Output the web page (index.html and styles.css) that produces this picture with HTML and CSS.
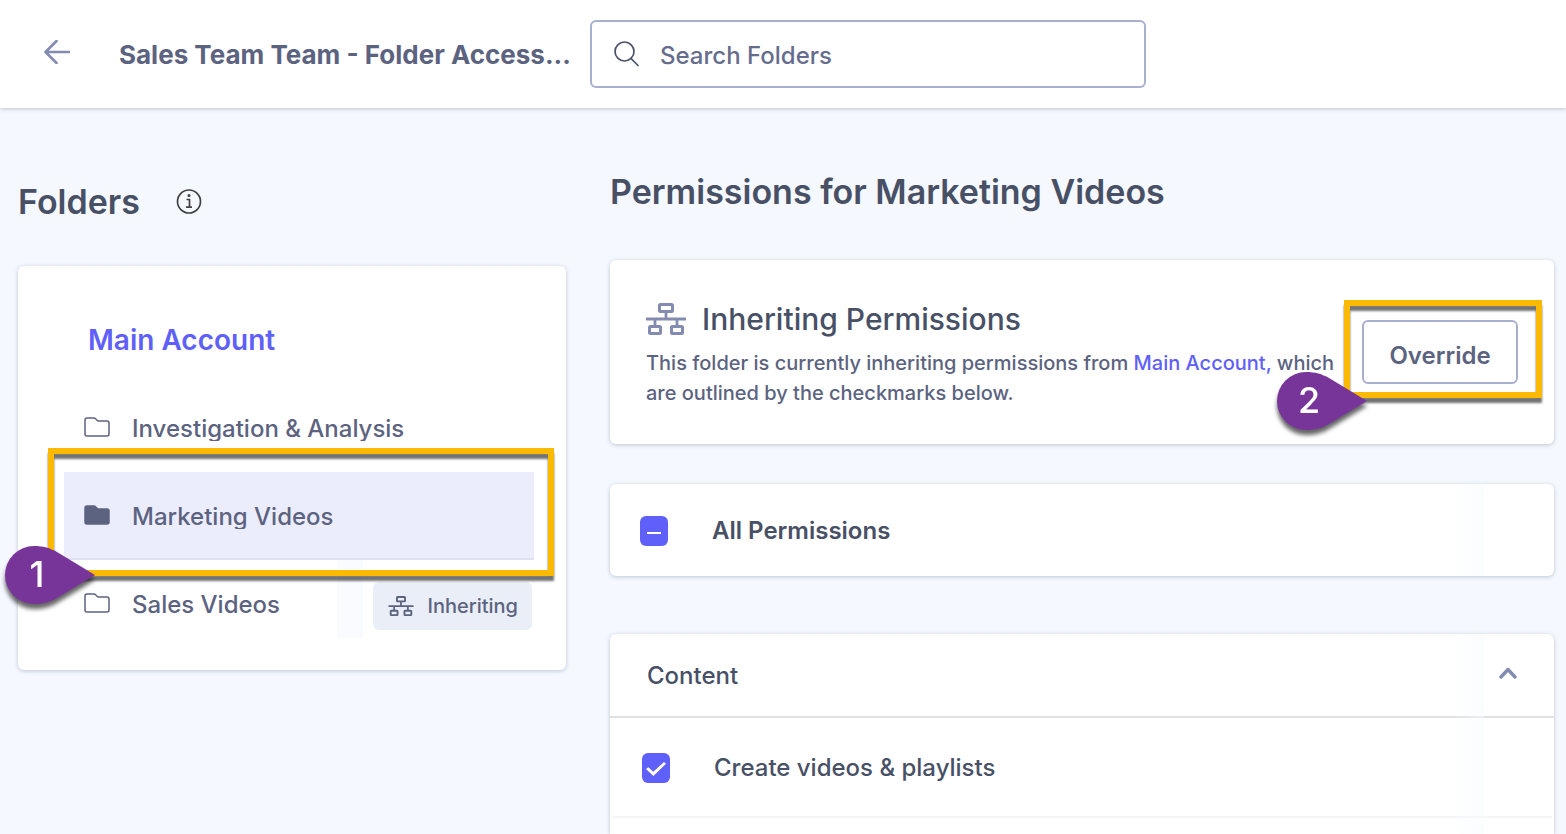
FILE: index.html
```
<!DOCTYPE html>
<html lang="en">
    <head>
        <meta charset="utf-8" />
        <title>Sales Team Team - Folder Access</title>
        <link rel="stylesheet" href="styles.css">
    </head>
    <body>
        <!-- shared icons -->
        <svg class="sprite" aria-hidden="true">
            <symbol id="icon-folder" viewBox="0 0 26 20">
                <path d="M1 3a2 2 0 0 1 2-2h7a2 2 0 0 1 1.500.700L14 4h9a2 2 0 0 1 2 2v11a2 2 0 0 1-2 2H3a2 2 0 0 1-2-2z" stroke="currentColor" stroke-width="1.500" stroke-linejoin="round"/>
            </symbol>
            <symbol id="icon-tree" viewBox="0 0 40 32">
                <g fill="none" stroke="currentColor">
                    <rect x="13.500" y="1.500" width="13" height="7" rx="1" stroke-width="3"/>
                    <rect x="3.500" y="23.500" width="11" height="7" rx="1" stroke-width="3"/>
                    <rect x="25.500" y="23.500" width="11" height="7" rx="1" stroke-width="3"/>
                    <path d="M0 16h40M20 9v7M9 16v7M31 16v7" stroke-width="2.800"/>
                </g>
            </symbol>
            <symbol id="icon-pin" viewBox="0 0 90 58">
                <path d="M29 0C38 0 45 2 52 6L90 29L52 52C45 56 38 58 29 58A29 29 0 0 1 29 0Z" fill="#773599"/>
            </symbol>
        </svg>

        <header class="top-bar">
            <button type="button" class="back" aria-label="Back">
                <svg width="26" height="24" viewBox="0 0 26 24" fill="none" stroke="currentColor" stroke-width="2.600" stroke-linecap="round" stroke-linejoin="round"><path d="M25 12H2M12.500 1L1.500 12L12.500 23"/></svg>
            </button>
            <h1 class="page-title">Sales Team Team - Folder Access...</h1>
            <label class="search">
                <svg width="26" height="26" viewBox="0 0 26 26" fill="none" stroke="currentColor" stroke-width="1.700" stroke-linecap="round"><circle cx="10.500" cy="10.500" r="9.500"/><path d="M17 17.500l7 7"/></svg>
                <input type="search" placeholder="Search Folders" aria-label="Search Folders">
            </label>
        </header>

        <main class="layout">
            <!-- folder tree -->
            <section class="folders">
                <div class="folders-heading">
                    <h2>Folders</h2>
                    <svg width="26" height="26" viewBox="0 0 26 26" fill="none" stroke="#414141" stroke-width="1.700"><circle cx="13" cy="12.500" r="11.500"/><path d="M10.500 10.500H13.500V18M10 18.200H16" /><circle cx="13" cy="6.500" r="1.500" fill="#414141" stroke="none"/></svg>
                </div>
                <nav class="card folder-card">
                    <a href="#" class="main-account">Main Account</a>
                    <ul class="folder-list">
                        <li class="folder">
                            <svg class="folder-icon"><use href="#icon-folder"/></svg>
                            <a href="#">Investigation &amp; Analysis</a>
                        </li>
                        <li class="folder selected">
                            <svg class="folder-icon"><use href="#icon-folder"/></svg>
                            <a href="#">Marketing Videos</a>
                            <div class="callout callout-folder"></div>
                            <div class="pin pin-folder"><svg><use href="#icon-pin"/></svg><span>1</span></div>
                        </li>
                        <li class="folder">
                            <svg class="folder-icon"><use href="#icon-folder"/></svg>
                            <a href="#">Sales Videos</a>
                            <span class="fade"></span>
                            <span class="badge"><svg><use href="#icon-tree"/></svg>Inheriting</span>
                        </li>
                    </ul>
                </nav>
            </section>

            <!-- permissions of the selected folder -->
            <section class="permissions">
                <h2>Permissions for Marketing Videos</h2>

                <div class="card inherit-card">
                    <div class="inherit-text">
                        <h3><svg><use href="#icon-tree"/></svg>Inheriting Permissions</h3>
                        <p>This folder is currently inheriting permissions from <a href="#">Main Account,</a> which are outlined by the checkmarks below.</p>
                    </div>
                    <div class="override-wrap">
                        <button type="button" class="override">Override</button>
                        <div class="callout callout-override"></div>
                        <div class="pin pin-override"><svg><use href="#icon-pin"/></svg><span>2</span></div>
                    </div>
                </div>

                <div class="card all-card">
                    <label class="check-row all-row">
                        <input type="checkbox" id="allPermissions">
                        <span>All Permissions</span>
                    </label>
                </div>

                <div class="card content-card">
                    <button type="button" class="content-heading">
                        Content
                        <svg width="18" height="16" viewBox="0 0 18 16" fill="none" stroke="#838bb0" stroke-width="3.400" stroke-linecap="round" stroke-linejoin="round"><path d="M2 10l7-7.500L16 10"/></svg>
                    </button>
                    <label class="check-row content-row">
                        <input type="checkbox" checked>
                        <span>Create videos &amp; playlists</span>
                    </label>
                </div>
            </section>
        </main>
        <script>
            // only some permissions are on
            document.getElementById("allPermissions").indeterminate = true;
        </script>
    </body>
</html>
```
FILE: styles.css
```
* {
    box-sizing: border-box;
}

body {
    display: flex;
    flex-direction: column;
    min-height: 100vh;
    margin: 0;
    background-color: #f5f8ff;
    color: #5c6380;
    font-family: Inter, "Liberation Sans", sans-serif;
    font-size: 24px;
    font-weight: 450;
}

h1, h2, h3, p, ul {
    margin: 0;
    padding: 0;
}

a {
    color: inherit;
    text-decoration: none;
}

button, input {
    font: inherit;
    color: inherit;
}

.sprite {
    position: absolute;
    width: 0;
    height: 0;
}

/* top bar */
.top-bar {
    display: flex;
    align-items: center;
    padding: 20px 44px;
    background-color: white;
    box-shadow: 0 1px 4px rgba(60, 70, 100, 0.3);
}

.back {
    display: flex;
    margin: 0 49px 4px 0;
    padding: 0;
    border: none;
    background: none;
    color: #838bb0;
    cursor: pointer;
}

.page-title {
    flex: 0 0 471px;
    font-size: 26px;
    font-weight: 700;
    white-space: nowrap;
}

.search {
    display: flex;
    align-items: center;
    gap: 20px;
    flex: 0 1 556px;
    height: 68px;
    padding: 0 22px;
    border: 2px solid #a7b0ce;
    border-radius: 6px;
    color: #4a5268;
}

.search input {
    flex: 1;
    min-width: 0;
    padding: 2px 0 0;
    border: none;
    outline: none;
    background: none;
}

.search input::placeholder {
    color: #666d8c;
    opacity: 1;
}

/* two columns */
.layout {
    display: grid;
    grid-template-columns: 548px 1fr;
    gap: 44px;
    flex: 1;
    padding: 0 12px 0 18px;
}

.layout h2 {
    color: #485066;
    font-size: 34px;
    font-weight: 600;
    line-height: 40px;
}

.card {
    position: relative;
    border-radius: 6px;
    background-color: white;
    box-shadow: 0 1px 4px rgba(60, 80, 100, 0.3);
}

/* folders */
.folders-heading {
    display: flex;
    align-items: center;
    gap: 36px;
    padding: 74px 0 44px;
}

.folder-card {
    padding: 54px 32px 22px 46px;
}

.main-account {
    display: block;
    padding: 0 24px;
    color: #5f5ffa;
    font-size: 28px;
    font-weight: 600;
    line-height: 40px;
}

.folder-list {
    padding-top: 24px;
    list-style: none;
}

.folder {
    position: relative;
    display: flex;
    align-items: center;
    gap: 22px;
    height: 88px;
    padding: 0 20px;
    border-bottom: 2px solid transparent;
}

.folder a {
    overflow: hidden;
    padding-top: 4px;
    line-height: 24px;
}

.folder-icon {
    width: 26px;
    height: 20px;
    fill: none;
}

.folder.selected {
    z-index: 1;
    border-color: #dfe1f1;
    background-color: #ebedfd;
}

.selected .folder-icon {
    fill: currentColor;
}

.fade {
    align-self: stretch;
    width: 26px;
    margin: 0 -12px 8px auto;
    background-color: #fafbff;
}

.badge {
    display: flex;
    align-items: center;
    gap: 12px;
    height: 48px;
    margin: 6px -18px 0 0;
    padding: 0 14px;
    border-radius: 6px;
    background-color: #eaeef6;
    font-size: 20px;
}

.badge svg {
    width: 28px;
    height: 20px;
}

/* permissions */
.permissions {
    display: flex;
    flex-direction: column;
}

.permissions h2 {
    padding: 64px 0 48px;
}

.inherit-card {
    display: flex;
    align-items: center;
    gap: 14px;
    min-height: 184px;
    margin-bottom: 40px;
    padding: 36px;
}

.inherit-text {
    flex: 1;
}

.inherit-text h3 {
    display: flex;
    align-items: center;
    gap: 16px;
    margin-bottom: 6px;
    color: #485066;
    font-size: 30px;
    font-weight: 500;
    line-height: 46px;
}

.inherit-text h3 svg {
    width: 40px;
    height: 32px;
    color: #838bb0;
}

.inherit-text p {
    font-size: 20px;
    font-weight: 500;
    line-height: 30px;
}

.inherit-text a {
    color: #5f5ffa;
}

.override-wrap {
    position: relative;
}

.override {
    width: 156px;
    height: 64px;
    padding: 6px 0 0;
    border: 2px solid #a7b0ce;
    border-radius: 6px;
    background-color: white;
    font-weight: 600;
    cursor: pointer;
}

.check-row {
    display: flex;
    align-items: center;
    gap: 44px;
    color: #485066;
}

.check-row input {
    appearance: none;
    display: grid;
    place-items: center;
    width: 28px;
    height: 30px;
    margin: 2px 0 0;
    border-radius: 6px;
    background-color: #5f5ffa;
}

.check-row input:indeterminate::before {
    content: "";
    width: 14px;
    height: 2px;
    margin-top: 4px;
    background-color: white;
}

.check-row input:checked::before {
    content: "";
    width: 20px;
    height: 14px;
    margin-top: 2px;
    background-color: white;
    clip-path: polygon(0 50%, 12% 38%, 36% 70%, 90% 0, 100% 12%, 37% 100%);
}

.all-card {
    margin-bottom: 58px;
}

.all-row {
    height: 92px;
    padding: 0 30px;
    font-weight: 600;
}

.content-card {
    flex: 1;
    border-radius: 6px 6px 0 0;
}

.content-heading {
    display: flex;
    align-items: center;
    justify-content: space-between;
    width: 100%;
    height: 84px;
    padding: 0 37px;
    border: none;
    border-bottom: 2px solid #e0e1e4;
    background: none;
    color: #485066;
    cursor: pointer;
}

.content-row {
    height: 100px;
    margin: 0 2px;
    padding: 0 30px;
    border-bottom: 2px solid #f4f5f7;
}

.all-card::after,
.content-card::after {
    content: "";
    position: absolute;
    top: 0;
    right: 70px;
    bottom: 0;
    width: 30px;
    background: linear-gradient(to right, transparent, rgba(247, 250, 255, 0.5));
    pointer-events: none;
}

/* numbered callouts */
.callout {
    position: absolute;
    border: 6px solid #fbb900;
    filter: drop-shadow(0 5px 1px rgba(0, 0, 0, 0.55));
    pointer-events: none;
}

.callout-folder {
    inset: -24px -20px -18px -16px;
}

.callout-override {
    inset: -20px -24px -14px -18px;
}

.pin {
    position: absolute;
    width: 90px;
    height: 58px;
    color: white;
    font-size: 36px;
    font-weight: 500;
    line-height: 56px;
    filter: drop-shadow(0 5px 2px rgba(0, 0, 0, 0.6));
}

.pin svg {
    position: absolute;
    width: 90px;
    height: 58px;
}

.pin span {
    position: relative;
    display: block;
    width: 64px;
    text-align: center;
}

.pin-folder {
    left: -59px;
    bottom: -46px;
}

.pin-override {
    left: -85px;
    bottom: -46px;
}
```
